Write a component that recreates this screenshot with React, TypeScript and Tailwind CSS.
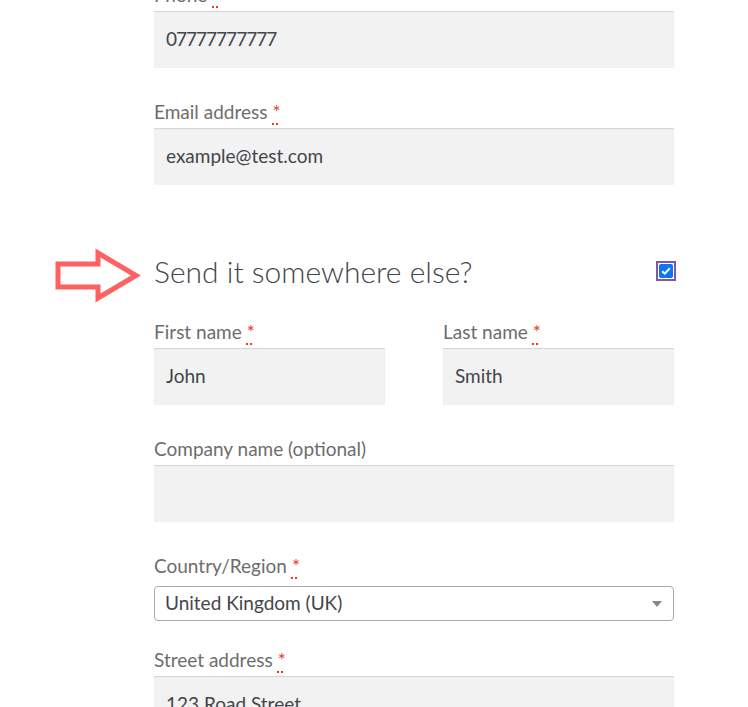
import type { ReactNode } from 'react';

const font = { fontFamily: 'Lato, "Open Sans", sans-serif' };

function Required() {
  return (
    <abbr
      className="ml-[5px] text-[#e2401c] underline decoration-dotted decoration-2 underline-offset-[4px]"
      title="required"
    >
      *
    </abbr>
  );
}

function Label({ children, required }: { children: ReactNode; required?: boolean }) {
  return (
    <label className="mb-[2px] block h-[28px] text-[19px] leading-[28px] text-[#6d6d6d]">
      {children}
      {required && <Required />}
    </label>
  );
}

function TextInput({ value, tight }: { value?: string; tight?: boolean }) {
  return (
    <div
      className={`flex h-[57px] w-full items-center bg-[#f2f2f2] px-[12px] text-[19px] text-[#43454b] shadow-[inset_0_1px_1px_rgba(0,0,0,0.125)] ${tight ? 'tracking-[-1px]' : ''}`}
    >
      {value}
    </div>
  );
}

function Field({
  label,
  value,
  required,
  tight,
  className,
}: {
  label: string;
  value?: string;
  required?: boolean;
  tight?: boolean;
  className?: string;
}) {
  return (
    <div className={className}>
      <Label required={required}>{label}</Label>
      <TextInput value={value} tight={tight} />
    </div>
  );
}

function Arrow() {
  return (
    <svg width="92" height="60" viewBox="50 245 92 60" className="absolute left-[-104px] top-[-5px]">
      <polygon
        points="58,263 98,263 98,252 136,274.5 98,297 98,286 58,286"
        fill="none"
        stroke="#fe6161"
        strokeWidth="5"
      />
    </svg>
  );
}

export default function App() {
  return (
    <div className="min-h-screen overflow-hidden bg-white" style={font}>
      <div className="ml-[154px] w-[520px] -mt-[19px]">
        <Field label="Phone" value="07777777777" required tight />
        <Field label="Email address" value="example@test.com" required className="mt-[30px]" />

        {/* ship to a different address */}
        <div className="relative mt-[66px] flex h-[40px] items-center justify-between">
          <Arrow />
          <h3 className="text-[30px] font-light leading-[40px] text-[#43454b]">Send it somewhere else?</h3>
          <span className="mr-[-2px] flex h-[20px] w-[20px] items-center justify-center border-2 border-[#7f54b3]">
            <span className="flex h-[14px] w-[14px] items-center justify-center rounded-[2px] bg-[#0a75f7]">
              <svg width="10" height="8" viewBox="0 0 10 8">
                <path d="M1.2 4.2 L3.8 6.6 L8.8 1.2" fill="none" stroke="white" strokeWidth="2" />
              </svg>
            </span>
          </span>
        </div>

        <div className="mt-[27px] grid grid-cols-2 gap-x-[58px]">
          <Field label="First name" value="John" required />
          <Field label="Last name" value="Smith" required />
        </div>

        <Field label="Company name (optional)" className="mt-[30px]" />

        <div className="mt-[30px]">
          <Label required>Country/Region</Label>
          <div className="mt-[6px] flex h-[35px] items-center justify-between rounded-[4px] border border-[#aaaaaa] pl-[10px] pr-[11px] text-[19px] text-[#43454b]">
            <span>United Kingdom (UK)</span>
            <span className="h-0 w-0 border-x-[5px] border-t-[6px] border-x-transparent border-t-[#888888]" />
          </div>
        </div>

        <Field label="Street address" value="123 Road Street" required className="mt-[25px]" />
      </div>
    </div>
  );
}
